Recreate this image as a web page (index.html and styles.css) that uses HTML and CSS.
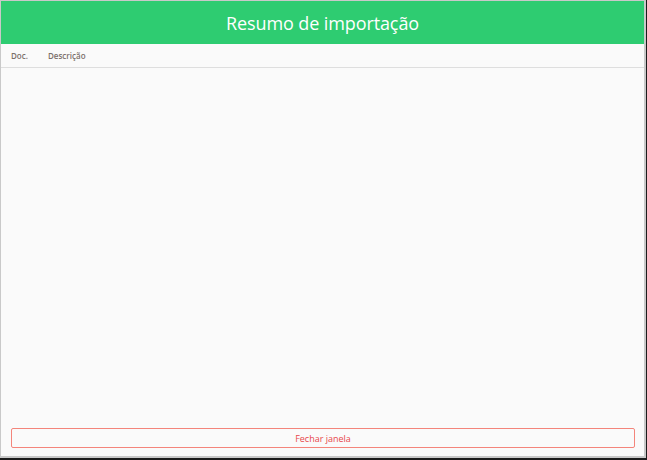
FILE: index.html
```html
<!DOCTYPE html>
<html>
  <head>
    <meta charset="utf-8" />
    <title>Resumo de importação</title>
    <link rel="stylesheet" href="styles.css">
  </head>
  <body>
    <div class="modal">
      <!-- cabeçalho -->
      <div class="modal-header">Resumo de importação</div>

      <!-- tabela de resultados -->
      <div class="modal-body">
        <table class="result-table">
          <thead>
            <tr>
              <th class="col-doc">Doc.</th>
              <th>Descrição</th>
            </tr>
          </thead>
          <tbody></tbody>
        </table>
      </div>

      <!-- rodapé -->
      <div class="modal-footer">
        <button class="btn-close">Fechar janela</button>
      </div>
    </div>
  </body>
</html>
```

FILE: styles.css
```css
* {
  box-sizing: border-box;
}
body {
  margin: 0;
  background-color: #1c1c1c;
  font-family: "Open Sans", sans-serif;
}

.modal {
  width: 646px;
  height: 458px;
  display: flex;
  flex-direction: column;
  background-color: #fafafa;
  border: 1px solid #c9c9c9;
  border-right-width: 2px;
  border-bottom-width: 2px;
}

/* cabeçalho verde */
.modal-header {
  height: 43px;
  background-color: #2ecc71;
  color: #fff;
  font-size: 18px;
  letter-spacing: -0.1px;
  display: flex;
  justify-content: center;
  align-items: center;
  flex-shrink: 0;
}

.modal-body {
  flex: 1;
}

.result-table {
  width: 100%;
  border-collapse: collapse;
}

.result-table th {
  text-align: left;
  font-size: 8px;
  font-weight: 600;
  color: #7a6f6a;
  height: 23px;
  padding: 0 0 0 10px;
  border-bottom: 1px solid #dedede;
}

.result-table th.col-doc {
  width: 37px;
}

.modal-footer {
  padding: 0 9px 8px 10px;
}

.btn-close {
  width: 100%;
  height: 20px;
  background-color: transparent;
  border: 1px solid #f4857b;
  border-radius: 2px;
  color: #e8474b;
  font-family: "Open Sans", sans-serif;
  font-size: 9px;
  cursor: pointer;
}
```
